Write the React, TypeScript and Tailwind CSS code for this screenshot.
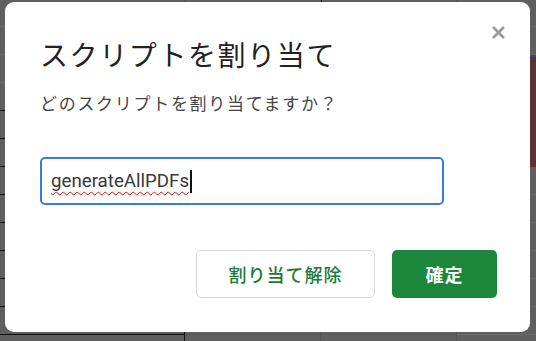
import { X } from "lucide-react";

const rows = Array.from({ length: 13 }, (_, i) => i);

function SheetBackdrop() {
  return (
    <div className="grid grid-cols-[185px_136px_136px_79px] grid-rows-[repeat(13,28px)] -mt-[1px]">
      {rows.map((r) => (
        <div
          key={`a${r}`}
          className={`border-b border-r ${r >= 3 ? "border-b-[#111] border-r-[#111]" : "border-b-[#6a6a6a] border-r-[#555]"}`}
        />
      ))}
      {rows.map((r) => (
        <div
          key={`b${r}`}
          className="border-b border-r border-b-[#575757] border-r-[#555]"
          style={{ gridColumn: 2, gridRow: r + 1 }}
        />
      ))}
      {rows.map((r) => (
        <div
          key={`c${r}`}
          className={`border-b border-r border-r-[#555] ${r === 0 ? "border-[#111] border-l border-b-2" : "border-b-[#575757]"}`}
          style={{ gridColumn: 3, gridRow: r + 1 }}
        />
      ))}
      {rows.map((r) => (
        <div
          key={`d${r}`}
          className={
            r === 2
              ? "row-span-4 border-t-2 border-b-2 border-t-[#2a4d8a] border-b-[#8a2222] bg-[#5a3434]"
              : "border-b border-b-[#6a6a6a]"
          }
          style={{ gridColumn: 4, gridRow: r === 2 ? "3 / span 4" : r + 1, display: r > 2 && r < 6 ? "none" : undefined }}
        />
      ))}
    </div>
  );
}

export default function App() {
  return (
    <div className="relative h-[341px] w-[536px] overflow-hidden bg-[#5f5f5f] font-['Roboto','Noto_Sans_CJK_JP',sans-serif]">
      <SheetBackdrop />

      <div
        role="dialog"
        className="absolute left-[5px] top-[2px] flex h-[330px] w-[525px] flex-col rounded-[9px] bg-white pl-[35px] pr-[33px] pt-[33px]"
      >
        <button className="absolute right-[22px] top-[21px] text-[#9a9a9a]" aria-label="閉じる">
          <X className="h-[19px] w-[19px]" strokeWidth={3.4} />
        </button>

        <h2 className="text-[28px] leading-[38px] tracking-[1.6px] text-[#222] font-['Noto_Sans_CJK_JP',sans-serif]">
          スクリプトを割り当て
        </h2>
        <p className="mt-[18px] text-[17px] leading-[24px] tracking-[1.7px] text-[#444] font-['Noto_Sans_CJK_JP',sans-serif]">
          どのスクリプトを割り当てますか？
        </p>

        <div className="mt-[42px] flex h-[48px] w-[404px] items-center rounded-[5px] border-2 border-[#3a79e3] pl-[9px]">
          <span className="text-[18.7px] leading-[24px] text-[#383838] underline decoration-wavy decoration-[#f01010] decoration-[1px] underline-offset-[4px]">
            generateAllPDFs
          </span>
          <span className="ml-[1px] h-[23px] w-[2px] bg-[#111]" />
        </div>

        <div className="mt-[45px] flex justify-end gap-[17px]">
          <button className="h-[48px] w-[179px] rounded-[5px] border border-[#d9d9d9] bg-white text-[18px] font-medium tracking-[1px] text-[#1b7a38] font-['Noto_Sans_CJK_JP',sans-serif]">
            割り当て解除
          </button>
          <button className="h-[48px] w-[105px] rounded-[5px] bg-[#1c873b] text-[18px] font-bold tracking-[1px] text-white font-['Noto_Sans_CJK_JP',sans-serif]">
            確定
          </button>
        </div>
      </div>
    </div>
  );
}
